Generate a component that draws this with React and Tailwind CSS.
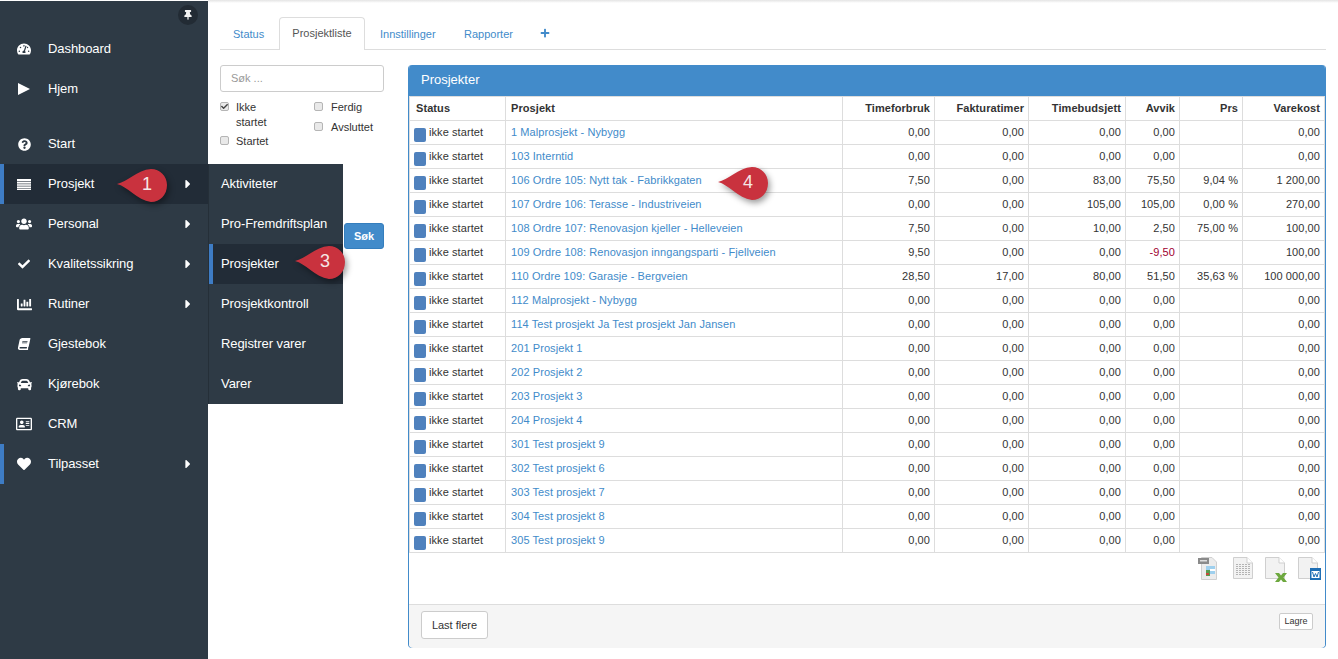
import React from "react";
import { FaTachometerAlt, FaQuestionCircle, FaUsers, FaCheck, FaChartBar, FaBook, FaCar, FaRegAddressCard, FaHeart, FaCaretRight, FaThumbtack, FaPlus } from "react-icons/fa";

function Stripes({ style }) {
  return (
    <svg width="14" height="11" viewBox="0 0 14 11" style={style} fill="#fff">
      <rect x="0" y="0" width="14" height="2.400" />
      <rect x="0" y="3" width="14" height="1.600" />
      <rect x="0" y="5.200" width="14" height="1.600" />
      <rect x="0" y="7.400" width="14" height="1.600" />
      <rect x="0" y="9.500" width="14" height="1.500" />
    </svg>
  );
}

function Triangle() {
  return (
    <svg width="12" height="12" viewBox="0 0 12 12" fill="#fff">
      <path d="M0 0L12 6L0 12Z" />
    </svg>
  );
}

function SkewBook({ style }) {
  return <FaBook style={style} className="-skew-x-12" />;
}

const menu = [
  { t: "Dashboard", I: FaTachometerAlt, y: 29, s: 14 },
  { t: "Hjem", I: Triangle, y: 69 },
  { t: "Start", I: FaQuestionCircle, y: 124, s: 13 },
  { t: "Prosjekt", I: Stripes, y: 164, arrow: true, active: true, bar: true },
  { t: "Personal", I: FaUsers, y: 204, arrow: true, s: 16 },
  { t: "Kvalitetssikring", I: FaCheck, y: 244, arrow: true, s: 12 },
  { t: "Rutiner", I: FaChartBar, y: 284, arrow: true, s: 15 },
  { t: "Gjestebok", I: SkewBook, y: 324, s: 12 },
  { t: "Kjørebok", I: FaCar, y: 364, s: 15 },
  { t: "CRM", I: FaRegAddressCard, y: 404, s: 16 },
  { t: "Tilpasset", I: FaHeart, y: 444, arrow: true, bar: true, s: 14 },
];
const sub = ["Aktiviteter", "Pro-Fremdriftsplan", "Prosjekter", "Prosjektkontroll", "Registrer varer", "Varer"];
const z = ["0,00", "0,00", "0,00", "0,00", "", "0,00"];
const rows = [
  ["1 Malprosjekt - Nybygg", ...z],
  ["103 Interntid", ...z],
  ["106 Ordre 105: Nytt tak - Fabrikkgaten", "7,50", "0,00", "83,00", "75,50", "9,04 %", "1 200,00"],
  ["107 Ordre 106: Terasse - Industriveien", "0,00", "0,00", "105,00", "105,00", "0,00 %", "270,00"],
  ["108 Ordre 107: Renovasjon kjeller - Helleveien", "7,50", "0,00", "10,00", "2,50", "75,00 %", "100,00"],
  ["109 Ordre 108: Renovasjon inngangsparti - Fjellveien", "9,50", "0,00", "0,00", "-9,50", "", "100,00"],
  ["110 Ordre 109: Garasje - Bergveien", "28,50", "17,00", "80,00", "51,50", "35,63 %", "100 000,00"],
  ["112 Malprosjekt - Nybygg", ...z],
  ["114 Test prosjekt Ja Test prosjekt Jan Jansen", ...z],
  ["201 Prosjekt 1", ...z],
  ["202 Prosjekt 2", ...z],
  ["203 Prosjekt 3", ...z],
  ["204 Prosjekt 4", ...z],
  ["301 Test prosjekt 9", ...z],
  ["302 Test prosjekt 6", ...z],
  ["303 Test prosjekt 7", ...z],
  ["304 Test prosjekt 8", ...z],
  ["305 Test prosjekt 9", ...z],
];
const heads = ["Timeforbruk", "Fakturatimer", "Timebudsjett", "Avvik", "Prs", "Varekost"];
const widths = [96, 337, 92, 94, 97, 54, 63, 82];

function Drop({ x, y, n, w = 50, h = 33 }) {
  return (
    <div className="absolute z-20" style={{ left: x, top: y, width: w, height: h }}>
      <svg width={w} height={h} viewBox="0 0 50 33" className="absolute left-0 top-0 overflow-visible drop-shadow-[2px_3px_3px_rgba(0,0,0,0.4)]">
        <path d="M0 15 C10 13 20 1 34 0 C43 0 50 7 50 16 C50 26 43 33 34 33 C20 31 10 17 0 15Z" fill="#c9323e" />
      </svg>
      <span className="absolute text-[18px] leading-[31px] text-[#f5e6e6]" style={{ left: 25 }}>{n}</span>
    </div>
  );
}

function Box({ checked, className = "" }) {
  return (
    <span className={"absolute w-[9px] h-[9px] rounded-[2px] border border-[#b5b5b5] bg-[#e9e9e9] flex items-center justify-center " + className}>
      {checked && <FaCheck className="text-[#444] text-[7px]" />}
    </span>
  );
}

function FileIcon({ x, y = 557, children, lines }) {
  return (
    <svg className="absolute" style={{ left: x, top: y }} width="26" height="26" viewBox="0 0 26 26">
      <path d="M.5 .5H14L19.500 6V21.500H.5Z" fill="#f2f2f2" stroke="#cfcfcf" />
      <path d="M14 .5V6H19.500" fill="#fff" stroke="#cfcfcf" />
      {lines && [7, 9, 11, 13, 15, 17].map((y) => <path key={y} d={`M3 ${y + 0.5}H17`} stroke="#b4b4b4" strokeDasharray="2 1" />)}
      {children}
    </svg>
  );
}

export default function App() {
  return (
    <div className="relative w-[1338px] h-[659px] overflow-hidden bg-white text-[11px] font-[Liberation_Sans,Arial,sans-serif] text-[#333]">
      <div className="absolute left-[208px] right-0 top-0 h-[3px] bg-gradient-to-b from-[#e4e4e4] to-white" />
      {/* Sidebar */}
      <aside className="absolute left-0 top-px bottom-0 w-[208px] bg-[#2e3a45] z-10 text-[13px] tracking-[-0.08px] text-white">
        <div className="absolute left-[178px] top-[4px] w-5 h-5 rounded-full bg-[#222b34] flex items-center justify-center">
          <FaThumbtack className="text-[10px] text-[#f2f2f2]" />
        </div>
        {menu.map(({ t, I, y, s, arrow, active, bar }) => (
          <div key={t} className={"absolute left-0 w-[208px] h-10 flex items-center " + (active ? "bg-[#222c37]" : "")} style={{ top: y - 1 }}>
            {bar && <span className="absolute left-0 top-0 w-1 h-10 bg-[#3e7cc4]" />}
            <span className="absolute left-[16px] w-[16px] flex justify-center"><I style={{ fontSize: s }} /></span>
            <span className="absolute left-[48px]">{t}</span>
            {arrow && <FaCaretRight className="absolute left-[181px] text-[14px]" />}
          </div>
        ))}
      </aside>
      {/* Submenu */}
      <div className="absolute left-[208px] top-[164px] w-[135px] h-[240px] bg-[#2e3a45] z-10 text-white text-[13px] tracking-[-0.08px] border-l border-[#252f38]">
        {sub.map((t, i) => (
          <div key={t} className={"relative h-10 flex items-center pl-3 " + (i === 2 ? "bg-[#222c37]" : "")}>
            {i === 2 && <span className="absolute left-0 top-0 w-1 h-10 bg-[#3e7cc4]" />}
            {t}
          </div>
        ))}
      </div>
      <Drop x={117} y={169} n="1" />
      <Drop x={295} y={246} n="3" />
      <Drop x={718} y={167} n="4" />

      {/* Tabs */}
      <div className="absolute left-[220px] top-[49px] w-[1106px] h-px bg-[#ddd]" />
      <div className="absolute left-[233px] top-[26px] text-[#428bca]">Status</div>
      <div className="absolute left-[279px] top-[17px] w-[86px] h-[33px] bg-white border border-[#ddd] border-b-0 rounded-t-[4px] text-[#555] flex items-center justify-center pb-[2px]">Prosjektliste</div>
      <div className="absolute left-[380px] top-[26px] text-[#428bca]">Innstillinger</div>
      <div className="absolute left-[464px] top-[26px] text-[#428bca]">Rapporter</div>
      <FaPlus className="absolute left-[540px] top-[28px] text-[10px] text-[#428bca]" />

      {/* Filters */}
      <div className="absolute left-[220px] top-[65px] w-[164px] h-[27px] border border-[#ccc] rounded-[3px] pl-[10px] leading-[25px] text-[#999]">Søk ...</div>
      <Box checked className="left-[220px] top-[102px]" />
      <div className="absolute left-[236px] top-[100px] leading-[15px]">Ikke<br />startet</div>
      <Box className="left-[220px] top-[136px]" />
      <div className="absolute left-[236px] top-[134px] leading-[15px]">Startet</div>
      <Box className="left-[314px] top-[102px]" />
      <div className="absolute left-[331px] top-[100px] leading-[15px]">Ferdig</div>
      <Box className="left-[314px] top-[122px]" />
      <div className="absolute left-[331px] top-[120px] leading-[15px]">Avsluttet</div>
      <button className="absolute left-[344px] top-[223px] w-10 h-[26px] rounded-[3px] bg-[#428bca] border border-[#357ebd] text-white font-bold text-[11px]">Søk</button>

      {/* Panel */}
      <div className="absolute left-[408px] top-[65px] w-[918px] h-[583px] border border-[#428bca] border-t-0 rounded-[4px] overflow-hidden">
        <div className="h-[31px] bg-[#428bca] text-white text-[13px] pl-[12px] leading-[29px]">Prosjekter</div>
        <table className="table-fixed border-collapse text-[11px] w-[916px] tracking-[0.08px]">
          <colgroup>
            {widths.map((w, i) => <col key={i} style={{ width: w }} />)}
          </colgroup>
          <thead>
            <tr className="h-6 font-bold">
              <th className="border border-[#ddd] text-left pl-[6px] font-bold p-0">Status</th>
              <th className="border border-[#ddd] text-left pl-[5px] font-bold p-0">Prosjekt</th>
              {heads.map((h) => <th key={h} className="border border-[#ddd] text-right pr-[4px] font-bold p-0">{h}</th>)}
            </tr>
          </thead>
          <tbody>
            {rows.map((r) => (
              <tr key={r[0]} className="h-6">
                <td className="border border-[#ddd] p-0 pl-[4px] whitespace-nowrap">
                  <span className="flex items-center h-[23px]">
                    <span className="w-3 h-[14px] rounded-[2px] bg-[#4f81bd] mr-[3px] translate-y-[2px]" />
                    <span>ikke startet</span>
                  </span>
                </td>
                <td className="border border-[#ddd] p-0 pl-[5px] text-[#428bca] whitespace-nowrap">{r[0]}</td>
                {r.slice(1).map((c, i) => (
                  <td key={i} className={"border border-[#ddd] p-0 pr-[4px] text-right whitespace-nowrap " + (c === "-9,50" ? "text-[#a00030]" : "")}>{c}</td>
                ))}
              </tr>
            ))}
          </tbody>
        </table>
      </div>

      {/* Export icons */}
      <svg className="absolute left-[1198px] top-[557px]" width="20" height="24" viewBox="0 0 20 24">
        <path d="M3.500 .5H14L18.500 5V22.500H3.500Z" fill="#ececec" stroke="#d0d0d0" />
        <rect x="0" y="1" width="11" height="6" fill="#8a8a8a" />
        <rect x="2" y="3" width="7" height="1.500" fill="#ddd" />
        <rect x="8" y="9" width="9" height="8" fill="#9fd0ee" />
        <rect x="8" y="13" width="4" height="6" fill="#5a9a50" />
        <rect x="12" y="12" width="5" height="2" fill="#fff" />
        <rect x="8" y="16" width="3" height="2" fill="#c84a3a" />
      </svg>
      <FileIcon x={1233} lines />
      <FileIcon x={1265}>
        <path d="M10 16H14L16 18.500L18 16H22L18.500 20.500L22 25H18L16 22.500L14 25H10L13.500 20.500Z" fill="#6da83e" />
      </FileIcon>
      <FileIcon x={1298}>
        <rect x="12" y="11" width="11" height="12" fill="#1f6fb5" />
        <rect x="13.500" y="14" width="8" height="7" fill="#fff" />
        <path d="M14.500 15L16 20L17.500 16.500L19 20L20.500 15" fill="none" stroke="#1f6fb5" />
      </FileIcon>

      {/* Footer */}
      <div className="absolute left-[409px] top-[604px] w-[916px] h-[44px] bg-[#f5f5f5] border-t border-[#ddd] rounded-b-[4px]">
        <button className="absolute left-3 top-[6px] w-[67px] h-[28px] bg-white border border-[#ccc] rounded-[3px] text-[11px] text-[#333]">Last flere</button>
        <button className="absolute left-[870px] top-[8px] w-[34px] h-[17px] bg-white border border-[#ccc] rounded-[2px] text-[9px] text-[#333]">Lagre</button>
      </div>
    </div>
  );
}
